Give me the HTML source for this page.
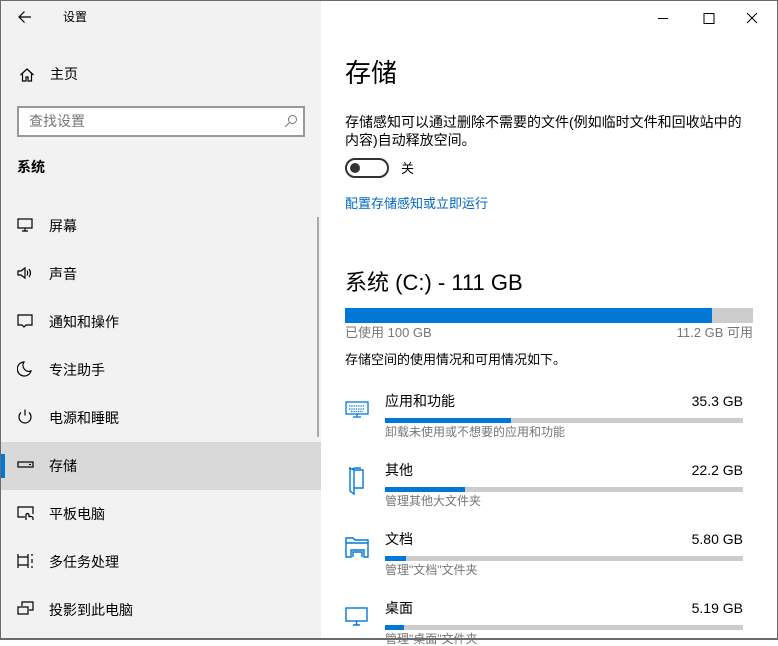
<!DOCTYPE html>
<html><head><meta charset="utf-8"><style>
*{margin:0;padding:0;box-sizing:border-box}
body{width:778px;height:640px;overflow:hidden;font-family:"Liberation Sans","Noto Sans CJK SC",sans-serif;background:#fff;position:relative;color:#000}
.win{position:absolute;left:0;top:0;width:778px;height:640px;border:1px solid #6b6b6b;}
.left{position:absolute;left:1px;top:1px;width:320px;height:638px;background:#f2f2f2}
.t{position:absolute;white-space:nowrap;line-height:1}
.item{position:absolute;left:0;width:320px;height:48px}
.item .t{left:48px;top:17px;font-size:14px}
.item svg{position:absolute;left:16px;top:15px}
.bar{position:absolute;background:#ccc;height:5px}
.bar div{background:#0078d7;height:100%}
.gb{position:absolute;right:35px;font-size:14px}
.sub{font-size:12px;color:#767676}
</style></head><body>
<div class="win"></div>
<div class="left">
<svg style="position:absolute;left:17px;top:9px" width="14" height="14" viewBox="0 0 14 14" fill="none" stroke="#000" stroke-width="1.2"><path d="M13 7H1M6.5 1.5L1 7l5.5 5.5"/></svg>
<div class="t" style="left:62px;top:10px;font-size:12px">设置</div>
<svg style="position:absolute;left:18px;top:66px" width="16" height="16" viewBox="0 0 16 16" fill="none" stroke="#000" stroke-width="1.2"><path d="M1.5 8L8 2l6.5 6M3.5 6.5V14h3.5v-4h2v4h3.5V6.5"/></svg>
<div class="t" style="left:49px;top:66px;font-size:14px">主页</div>
<div style="position:absolute;left:16px;top:105px;width:288px;height:31px;border:2px solid #999;background:#fff"></div>
<div class="t" style="left:28px;top:113px;font-size:14px;color:#777">查找设置</div>
<svg style="position:absolute;left:283px;top:113px" width="14" height="14" viewBox="0 0 14 14" fill="none" stroke="#777" stroke-width="1"><circle cx="8.5" cy="5.5" r="4"/><path d="M5.5 8.5L1 13"/></svg>
<div class="t" style="left:16px;top:159px;font-size:14px;font-weight:bold">系统</div>
<div style="position:absolute;left:316px;top:216px;width:2px;height:220px;background:#aaa"></div>
<div class="item" style="top:201px"><svg width="18" height="16" viewBox="0 0 18 16" fill="none" stroke="#000" stroke-width="1.2"><rect x="1" y="2" width="14" height="9"/><path d="M8 11v3M5 14h6"/></svg><div class="t">屏幕</div></div>
<div class="item" style="top:249px"><svg width="18" height="16" viewBox="0 0 18 16" fill="none" stroke="#000" stroke-width="1.2"><path d="M1 6h3l4-3v10l-4-3H1z"/><path d="M10 5.5q1.5 2.5 0 5M12 4q3 4 0 8"/></svg><div class="t">声音</div></div>
<div class="item" style="top:297px"><svg width="18" height="16" viewBox="0 0 18 16" fill="none" stroke="#000" stroke-width="1.2"><path d="M1 2h14v10H9l-2 2-2-2H1z"/></svg><div class="t">通知和操作</div></div>
<div class="item" style="top:345px"><svg width="18" height="16" viewBox="0 0 18 16" fill="none" stroke="#000" stroke-width="1.2"><path d="M7 1a7 7 0 1 0 7 9A6 6 0 0 1 7 1z"/></svg><div class="t">专注助手</div></div>
<div class="item" style="top:393px"><svg width="18" height="16" viewBox="0 0 18 16" fill="none" stroke="#000" stroke-width="1.2"><path d="M4 3.5a6 6 0 1 0 8 0M8 0.5v6"/></svg><div class="t">电源和睡眠</div></div>
<div class="item" style="top:441px;background:#d9d9d9"><div style="position:absolute;left:0;top:12px;width:4px;height:24px;background:#0078d7"></div><svg width="18" height="16" viewBox="0 0 18 16" fill="none" stroke="#000" stroke-width="1.2"><rect x="1" y="5" width="15" height="5"/><path d="M12 7.5h2"/></svg><div class="t">存储</div></div>
<div class="item" style="top:489px"><svg width="18" height="16" viewBox="0 0 18 16" fill="none" stroke="#000" stroke-width="1.2"><path d="M8 12H1V2h15v7"/><path d="M9 15v-5a1.5 1.5 0 0 1 3 0v1.5h2a2 2 0 0 1 2 2V15"/></svg><div class="t">平板电脑</div></div>
<div class="item" style="top:537px"><svg width="18" height="16" viewBox="0 0 18 16" fill="none" stroke="#000" stroke-width="1.2"><path d="M1 1v14M1 4h10M1 12h10M11 1v14M15 1v2M15 6v4M15 13v2"/></svg><div class="t">多任务处理</div></div>
<div class="item" style="top:585px"><svg width="18" height="16" viewBox="0 0 18 16" fill="none" stroke="#000" stroke-width="1.2"><path d="M5 5V1h11v8h-4"/><rect x="1" y="6" width="10" height="7"/></svg><div class="t">投影到此电脑</div></div>
</div>
<svg style="position:absolute;left:656px;top:12px" width="110" height="12" viewBox="0 0 110 12" fill="none" stroke="#000" stroke-width="1"><path d="M2 6.5h10M48 1.5h10v10h-10zM91 1l10 10M101 1l-10 10"/></svg>
<div class="t" style="left:345px;top:60px;font-size:26px">存储</div>
<div class="t" style="left:345px;top:113px;font-size:14px;line-height:18px">存储感知可以通过删除不需要的文件(例如临时文件和回收站中的<br>内容)自动释放空间。</div>
<div style="position:absolute;left:345px;top:158px;width:44px;height:20px;border:2px solid #333;border-radius:10px"></div>
<div style="position:absolute;left:350px;top:163px;width:10px;height:10px;background:#333;border-radius:50%"></div>
<div class="t" style="left:401px;top:162px;font-size:13px">关</div>
<div class="t" style="left:345px;top:197px;font-size:13px;color:#0067c0">配置存储感知或立即运行</div>
<div class="t" style="left:345px;top:272px;font-size:22px">系统 (C:) - 111 GB</div>
<div class="bar" style="left:345px;top:308px;width:408px;height:15px"><div style="width:367px"></div></div>
<div class="t sub" style="left:345px;top:326px;font-size:13px">已使用 100 GB</div>
<div class="t sub" style="right:25px;top:326px;font-size:13px">11.2 GB 可用</div>
<div class="t" style="left:345px;top:353px;font-size:13px">存储空间的使用情况和可用情况如下。</div>

<svg style="position:absolute;left:345px;top:400px" width="24" height="20" viewBox="0 0 24 20" fill="none" stroke="#0078d7" stroke-width="1.3"><rect x="1" y="2" width="22" height="12"/><path d="M12 14v3M8 17h8"/><path d="M4 6h16M4 9h16M6 11.5h12" stroke-dasharray="1.3 1"/></svg>
<div class="t" style="left:385px;top:394px;font-size:14px">应用和功能</div><div class="t gb" style="top:394px">35.3 GB</div>
<div class="bar" style="left:385px;top:418px;width:358px"><div style="width:126px"></div></div>
<div class="t sub" style="left:385px;top:426px">卸载未使用或不想要的应用和功能</div>

<svg style="position:absolute;left:347px;top:466px" width="20" height="30" viewBox="0 0 20 30" fill="none" stroke="#0078d7" stroke-width="1.4"><path d="M2 2l5 2v24l-4-3V2zM7 4h9v18H7M5 3l3-1h6"/></svg>
<div class="t" style="left:385px;top:463px;font-size:14px">其他</div><div class="t gb" style="top:463px">22.2 GB</div>
<div class="bar" style="left:385px;top:487px;width:358px"><div style="width:80px"></div></div>
<div class="t sub" style="left:385px;top:495px">管理其他大文件夹</div>

<svg style="position:absolute;left:345px;top:536px" width="24" height="22" viewBox="0 0 24 22" fill="none" stroke="#0078d7" stroke-width="1.4"><path d="M1 21V2h7l2 2h13v17H19v-7H6v7z M1 7h22M8 21v-5h9v5"/></svg>
<div class="t" style="left:385px;top:532px;font-size:14px">文档</div><div class="t gb" style="top:532px">5.80 GB</div>
<div class="bar" style="left:385px;top:556px;width:358px"><div style="width:21px"></div></div>
<div class="t sub" style="left:385px;top:564px">管理"文档"文件夹</div>

<svg style="position:absolute;left:345px;top:607px" width="24" height="20" viewBox="0 0 24 20" fill="none" stroke="#0078d7" stroke-width="1.4"><rect x="1" y="1" width="21" height="13"/><path d="M11.5 14v4M8 18h7"/></svg>
<div class="t" style="left:385px;top:601px;font-size:14px">桌面</div><div class="t gb" style="top:601px">5.19 GB</div>
<div class="bar" style="left:385px;top:625px;width:358px"><div style="width:19px"></div></div>
<div class="t sub" style="left:385px;top:633px">管理"桌面"文件夹</div>
<div style="position:absolute;left:0;top:638px;width:778px;height:2px;background:#6b6b6b"></div>
</body></html>
